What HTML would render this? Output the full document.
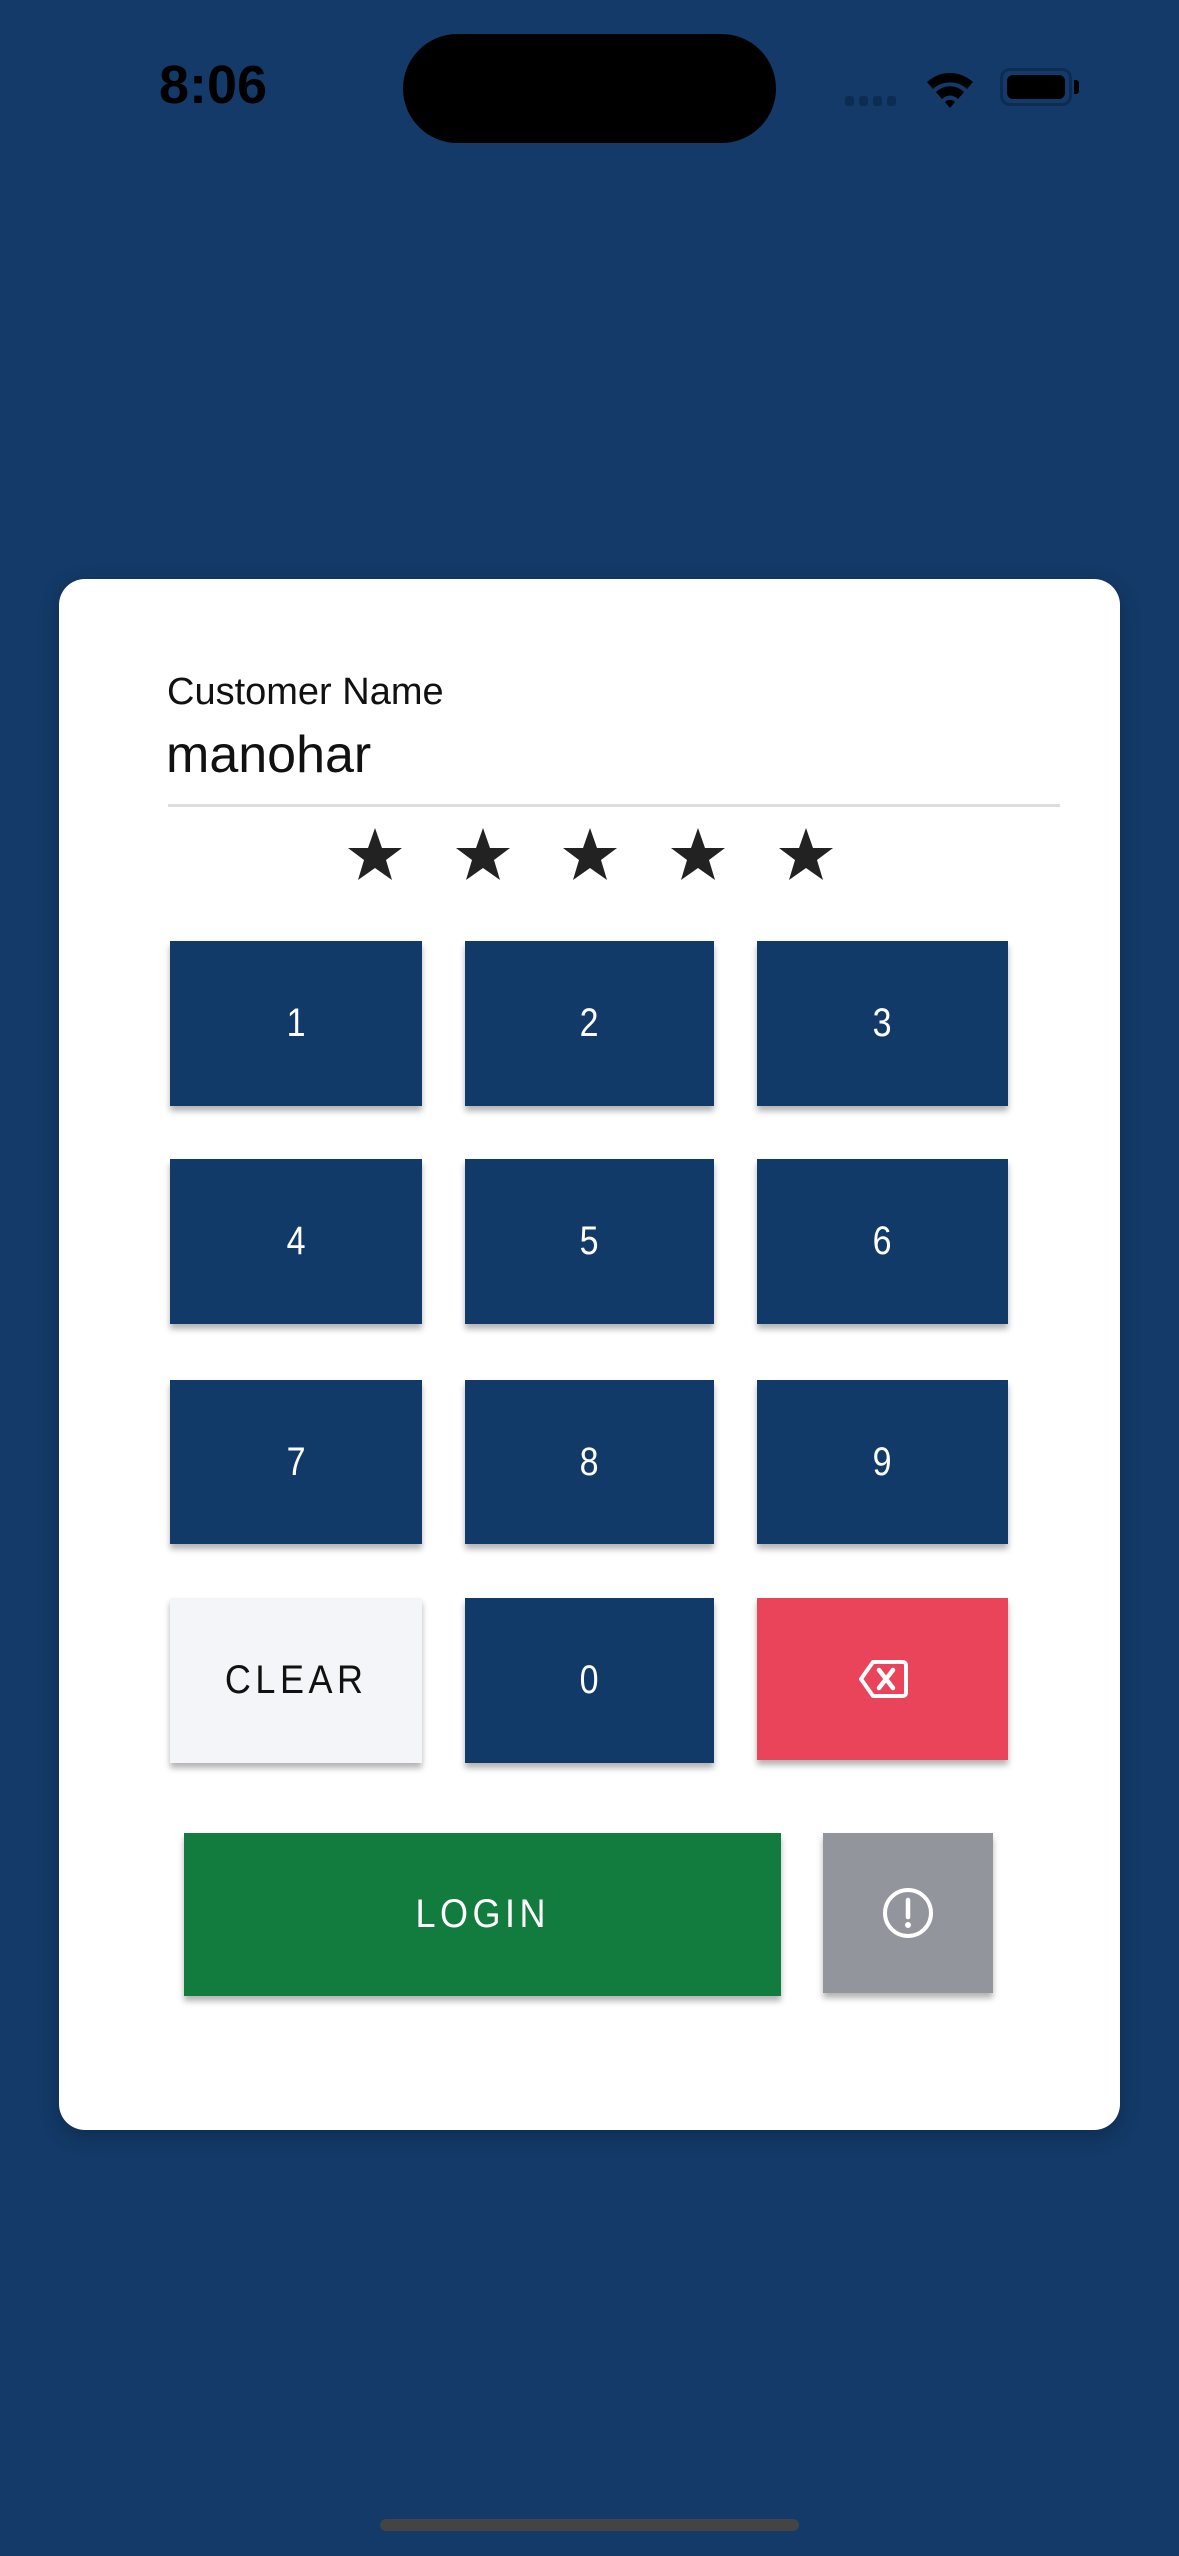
<!DOCTYPE html>
<html><head><meta charset="utf-8"><style>
*{margin:0;padding:0;box-sizing:border-box}
html,body{width:1179px;height:2556px;overflow:hidden;background:#133a68;font-family:"Liberation Sans",sans-serif}
.abs{position:absolute}
.card{position:absolute;left:59px;top:579px;width:1061px;height:1551px;background:#fff;border-radius:26px;box-shadow:0 6px 20px rgba(0,0,0,.25)}
.btn{position:absolute;display:flex;align-items:center;justify-content:center;color:#fff;font-size:40px;box-shadow:0 5px 6px rgba(0,0,0,.3);transform-origin:center}
.btn span{display:inline-block;transform:scaleX(.85)}
.navy{background:#123a69}
</style></head><body>
<div class="abs" style="left:159px;top:54px;font-size:54px;font-weight:bold;color:#000">8:06</div>
<div class="abs" style="left:403px;top:34px;width:373px;height:109px;background:#000;border-radius:55px"></div>
<div class="abs" style="left:845px;top:96px;width:60px;height:10px">
 <div class="abs" style="left:0;width:9px;height:10px;background:#0c2c52;border-radius:3px"></div>
 <div class="abs" style="left:14px;width:9px;height:10px;background:#0c2c52;border-radius:3px"></div>
 <div class="abs" style="left:28px;width:9px;height:10px;background:#0c2c52;border-radius:3px"></div>
 <div class="abs" style="left:42px;width:9px;height:10px;background:#0c2c52;border-radius:3px"></div>
</div>
<svg class="abs" style="left:925px;top:68px" width="50" height="40" viewBox="0 0 50 40"><path d="M2 14 A34 34 0 0 1 48 14 L42 21 A25 25 0 0 0 8 21Z M11 24 A20 20 0 0 1 39 24 L33 31 A11 11 0 0 0 17 31Z M20 34 A7 7 0 0 1 30 34 L25 40Z" fill="#000"/></svg>
<div class="abs" style="left:1000px;top:68px;width:72px;height:38px;border:3px solid #0c2c52;border-radius:10px"><div style="margin:4px;height:24px;background:#000;border-radius:6px"></div></div>
<div class="abs" style="left:1074px;top:80px;width:5px;height:14px;background:#000;border-radius:0 3px 3px 0"></div>

<div class="card"></div>
<div class="abs" style="left:167px;top:671px;font-size:38px;color:#111">Customer Name</div>
<div class="abs" style="left:166px;top:725px;font-size:52px;color:#111">manohar</div>
<div class="abs" style="left:168px;top:804px;width:892px;height:3px;background:#ddd"></div>
<svg class="abs" style="left:340px;top:826px" width="500" height="60" viewBox="0 0 500 60">
<g fill="#222"><path id="s" d="M35 2 L42 22 L62 22 L46 34 L52 54 L35 42 L18 54 L24 34 L8 22 L28 22Z"/>
<use href="#s" x="108"/><use href="#s" x="215"/><use href="#s" x="323"/><use href="#s" x="431"/></g></svg>

<div class="btn navy" style="left:170px;top:941px;width:252px;height:165px"><span>1</span></div>
<div class="btn navy" style="left:465px;top:941px;width:249px;height:165px"><span>2</span></div>
<div class="btn navy" style="left:757px;top:941px;width:251px;height:165px"><span>3</span></div>
<div class="btn navy" style="left:170px;top:1159px;width:252px;height:165px"><span>4</span></div>
<div class="btn navy" style="left:465px;top:1159px;width:249px;height:165px"><span>5</span></div>
<div class="btn navy" style="left:757px;top:1159px;width:251px;height:165px"><span>6</span></div>
<div class="btn navy" style="left:170px;top:1380px;width:252px;height:164px"><span>7</span></div>
<div class="btn navy" style="left:465px;top:1380px;width:249px;height:164px"><span>8</span></div>
<div class="btn navy" style="left:757px;top:1380px;width:251px;height:164px"><span>9</span></div>
<div class="btn" style="left:170px;top:1598px;width:252px;height:165px;background:#f4f5f8;color:#111;letter-spacing:5px"><span style="transform:scaleX(.9)">CLEAR</span></div>
<div class="btn navy" style="left:465px;top:1598px;width:249px;height:165px"><span>0</span></div>
<div class="btn" style="left:757px;top:1598px;width:251px;height:162px;background:#ea445a">
<svg width="52" height="40" viewBox="0 0 52 40"><path d="M16 3 H46 a3 3 0 0 1 3 3 V34 a3 3 0 0 1 -3 3 H16 L4 20Z" fill="none" stroke="#fff" stroke-width="4" stroke-linejoin="round"/><path d="M22 11 L36 29 M36 11 L22 29" stroke="#fff" stroke-width="4.5" stroke-linecap="round"/></svg></div>
<div class="btn" style="left:184px;top:1833px;width:597px;height:163px;background:#127c3e;letter-spacing:5px"><span style="transform:scaleX(.9)">LOGIN</span></div>
<div class="btn" style="left:823px;top:1833px;width:170px;height:160px;background:#93959c">
<svg width="54" height="54" viewBox="0 0 54 54"><circle cx="27" cy="27" r="23" fill="none" stroke="#fff" stroke-width="4"/><path d="M27 14 V31" stroke="#fff" stroke-width="4.5" stroke-linecap="round"/><circle cx="27" cy="39" r="3" fill="#fff"/></svg></div>

<div class="abs" style="left:380px;top:2519px;width:419px;height:12px;background:#444;border-radius:6px"></div>
</body></html>
